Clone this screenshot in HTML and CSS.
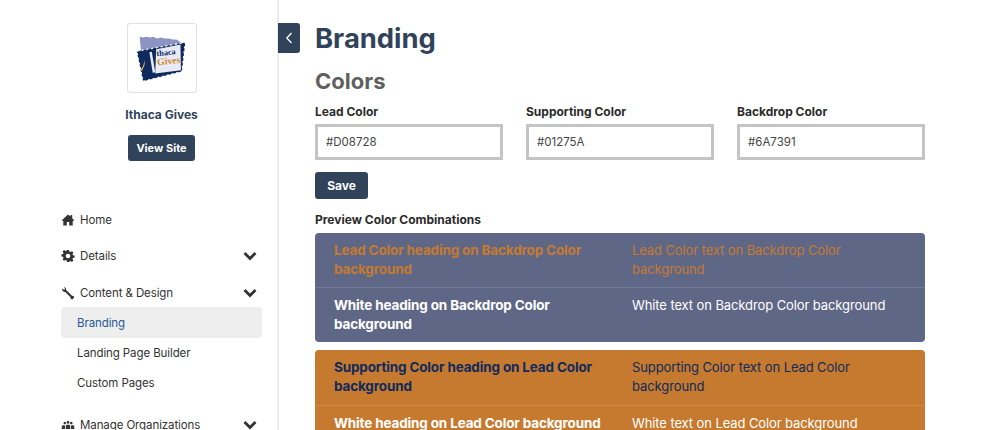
FILE: index.html
```html
<!DOCTYPE html>
<html lang="en">
<head>
<meta charset="utf-8">
<title>Branding</title>
<link rel="stylesheet" href="styles.css">
</head>
<body>
<div class="app">
  <aside class="sidebar">
    <div class="org">
      <div class="logo">
        <svg viewBox="0 0 70 70" width="68" height="68">
          <path class="lav" d="M12 13l4 1 3-1 4 1 3-1 4 2 4-1 4 1 4 0 4 1 4 0 6 4-1 4 1 4-2 14-40-8z"/>
          <path class="navy" d="M9 28l50-9-3.500 30L15.500 59z"/>
          <path class="perf" d="M9 28l50-9-3.500 30L15.500 59z"/>
          <path class="paper" d="M29 26l25-5 .5 26.500L28 51z"/>
          <path class="page" d="M22 29l2.500-.5 3.500 21-2.500 1z"/>
          <path class="flame" d="M17.500 37l-2 6-3 5.500 2-.5 2.500-5.500z"/>
          <g transform="rotate(-7 40 35)">
            <text class="logo-a" x="30" y="32">thaca</text>
            <text class="logo-b" x="29.500" y="41.500">Gives</text>
          </g>
        </svg>
      </div>
      <div class="org-name">Ithaca Gives</div>
      <a class="btn btn-view">View Site</a>
    </div>
    <nav class="nav">
      <div class="nav-item">
        <svg class="ico" viewBox="0 0 14 14"><path d="M7 1.500L.8 7.200 1.500 8l.8-.6v5.100h3.500V9h2.400v3.500h3.500V7.400l.8.6.7-.8-2-1.900V2H9.500v1.500z"/></svg>
        <span>Home</span>
      </div>
      <div class="nav-item">
        <svg class="ico" viewBox="0 0 14 14"><path fill-rule="evenodd" d="M6 1h2l.4 1.700 1 .4L11 2.200l1.400 1.400-.9 1.600.4 1 1.700.4v2l-1.700.4-.4 1 .9 1.600-1.400 1.400-1.600-.9-1 .4L8 13H6l-.4-1.700-1-.4-1.600.9L1.600 10.400l.9-1.600-.4-1L.4 7.400v-2l1.700-.4.4-1-.9-1.600L3 1l1.600 1.100 1-.4zM7 4.700a2.300 2.300 0 1 0 0 4.600 2.300 2.300 0 0 0 0-4.600z"/></svg>
        <span>Details</span>
        <svg class="chev" viewBox="0 0 14 10"><path d="M1.500 2l5.500 5.500L12.500 2"/></svg>
      </div>
      <div class="nav-group">
        <div class="nav-item nav-item-open">
          <svg class="ico" viewBox="0 0 14 14"><path d="M3 .8L5 2.300v1.600l.7.700 5.300 5.200 1.500.2.700 1.600-1.900 1.900-1.600-.7-.2-1.500L4.200 5.900l-1.700-.2L.8 3.400 1.500 2.600 3 3.900l1-1z"/></svg>
          <span>Content &amp; Design</span>
          <svg class="chev" viewBox="0 0 14 10"><path d="M1.500 2l5.500 5.500L12.500 2"/></svg>
        </div>
        <a class="sub-item sub-active">Branding</a>
        <a class="sub-item">Landing Page Builder</a>
        <a class="sub-item">Custom Pages</a>
      </div>
      <div class="nav-item">
        <svg class="ico" viewBox="0 0 14 14"><path d="M2.500 5a1.300 1.300 0 1 1 0 .1zM5.700 4.300a1.400 1.400 0 1 1 0 .1zM9 5a1.300 1.300 0 1 1 0 .1zM.8 11V8l1-.7h1.500l.7.500V11zM4.800 11V7.500l1-.8h2.400l1 .8V11zM10 11V7.800l.7-.5h1.500l1 .7v3z"/></svg>
        <span>Manage Organizations</span>
        <svg class="chev" viewBox="0 0 14 10"><path d="M1.500 2l5.500 5.500L12.500 2"/></svg>
      </div>
    </nav>
  </aside>
  <button class="toggle" aria-label="Collapse sidebar">
    <svg viewBox="0 0 10 14" width="10" height="14"><path d="M7.500 2L2.800 7l4.700 5"/></svg>
  </button>
  <main class="main">
    <h1 class="title">Branding</h1>
    <h2 class="section">Colors</h2>
    <div class="fields">
      <label class="field"><span class="label">Lead Color</span><input class="input" value="#D08728"></label>
      <label class="field"><span class="label">Supporting Color</span><input class="input" value="#01275A"></label>
      <label class="field"><span class="label">Backdrop Color</span><input class="input" value="#6A7391"></label>
    </div>
    <a class="btn btn-save">Save</a>
    <div class="preview-title">Preview Color Combinations</div>
    <section class="panel panel-backdrop">
      <div class="row">
        <div class="head c-lead">Lead Color heading on Backdrop Color background</div>
        <div class="body c-lead">Lead Color text on Backdrop Color background</div>
      </div>
      <div class="row">
        <div class="head">White heading on Backdrop Color background</div>
        <div class="body">White text on Backdrop Color background</div>
      </div>
    </section>
    <section class="panel panel-lead">
      <div class="row">
        <div class="head c-support">Supporting Color heading on Lead Color background</div>
        <div class="body c-support">Supporting Color text on Lead Color background</div>
      </div>
      <div class="row">
        <div class="head">White heading on Lead Color background</div>
        <div class="body">White text on Lead Color background</div>
      </div>
    </section>
  </main>
</div>
</body>
</html>
```
FILE: styles.css
```css
* { box-sizing: border-box; }
html, body { margin: 0; height: 430px; overflow: hidden; background: #fff; }
body { font-family: "Inter", "Liberation Sans", sans-serif; color: #333; font-size: 13px; }
.app { display: flex; align-items: flex-start; height: 430px; overflow: hidden; }

.sidebar { width: 279px; height: 430px; flex: none; border-right: 2px solid #ececec; padding-top: 23px; overflow: hidden; }
.org { display: flex; flex-direction: column; align-items: center; padding-left: 46px; height: 167px; }
.logo { width: 70px; height: 70px; border: 1px solid #e1e1e1; border-radius: 3px; display: flex; }
.lav { fill: #8d94c4; }
.navy { fill: #0f2a5c; }
.perf { fill: none; stroke: #fff; stroke-width: 1.400; stroke-dasharray: 2 3; }
.paper { fill: #e8eaf5; }
.page { fill: #e8eaf5; }
.flame { fill: #e2a44e; }
.logo-a { font: 700 8.500px "Liberation Serif", serif; fill: #0f2a5c; }
.logo-b { font: 700 10px "Liberation Serif", serif; fill: #d08728; }
.org-name { margin-top: 14px; font-weight: 700; font-size: 12px; line-height: 16px; color: #30435a; }
.btn { display: inline-flex; align-items: center; justify-content: center; background: #30435a; color: #fff; font-weight: 700; border-radius: 3px; }
.btn-view { margin-top: 12px; width: 67px; height: 26px; font-size: 11px; }

.nav { padding-left: 61px; padding-right: 15px; margin-top: 20px; }
.nav-item { display: flex; align-items: center; height: 20px; margin-bottom: 16px; font-size: 11.500px; letter-spacing: -.1px; color: #333; }
.nav-item span { margin-left: 5px; flex: 1; }
.ico { width: 14px; height: 14px; fill: #333; flex: none; }
.chev { width: 14px; height: 10px; fill: none; stroke: #333; stroke-width: 2.800; flex: none; margin-right: 5px; }
.nav-group { margin-top: 17px; margin-bottom: 17px; }
.nav-item-open { margin-bottom: 0; }
.sub-item { display: flex; align-items: center; height: 30px; padding-left: 16px; font-size: 11.500px; letter-spacing: -.1px; color: #333; border-radius: 4px; }
.sub-active { background: #eee; color: #255a95; margin-top: 4px; height: 31px; width: 201px; }

.toggle { flex: none; margin: 23px 0 0 -1px; width: 22px; height: 30px; border: 0; padding: 0; background: #30435a; border-radius: 0 3px 3px 0; display: flex; align-items: center; justify-content: center; }
.toggle path { fill: none; stroke: #fff; stroke-width: 1.300; }

.main { width: 610px; margin-left: 15px; flex: none; padding-top: 19px; }
.title { margin: 0; font-size: 27.400px; line-height: 38px; font-weight: 700; color: #30435a; }
.section { margin: 8px 0 0; font-size: 22px; line-height: 32px; font-weight: 700; color: #5f5f5f; }
.fields { display: flex; gap: 23px; margin-top: 6px; }
.field { display: flex; flex-direction: column; flex: 1; }
.label { font-size: 12px; font-weight: 700; line-height: 18px; color: #2b2b2b; }
.input { margin-top: 3px; width: 188px; height: 36px; border: 3px solid #c4c4c4; padding: 0 8px; font: 11.500px "Inter", "Liberation Sans", sans-serif; color: #444; background: #fff; outline: 0; border-radius: 0; }
.btn-save { margin-top: 12px; width: 53px; height: 27px; font-size: 12px; }
.preview-title { margin-top: 13px; font-size: 12px; font-weight: 700; line-height: 16px; color: #2b2b2b; }
.panel { margin-top: 5px; border-radius: 4px; overflow: hidden; color: #fff; }
.panel + .panel { margin-top: 8px; }
.panel-backdrop { background: #5f6786; }
.panel-lead { background: #c67a30; }
.panel-lead .row:first-child { padding-bottom: 9px; }
.row { display: grid; grid-template-columns: 298px 1fr; padding: 8px 19px; font-size: 13px; line-height: 19px; }
.row + .row { border-top: 1px solid rgba(255,255,255,.12); }
.head { font-size: 13.500px; letter-spacing: -.15px; font-weight: 700; padding-right: 10px; }
.body { font-size: 13px; letter-spacing: -.1px; }
.c-lead { color: #c67a30; }
.c-support { color: #0f2a5c; }
```
